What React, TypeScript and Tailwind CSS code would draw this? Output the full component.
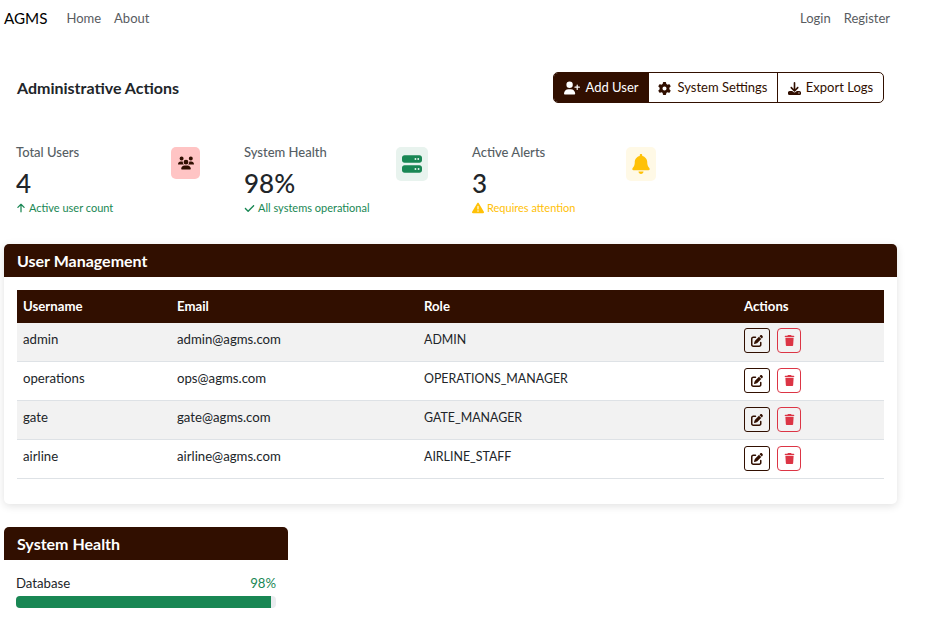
import { FaUserPlus, FaGear, FaDownload, FaUsers, FaServer, FaBell, FaArrowUp, FaCheck, FaTriangleExclamation, FaPenToSquare, FaTrash } from "react-icons/fa6";

const users = [
  ["admin", "admin@agms.com", "ADMIN"],
  ["operations", "ops@agms.com", "OPERATIONS_MANAGER"],
  ["gate", "gate@agms.com", "GATE_MANAGER"],
  ["airline", "airline@agms.com", "AIRLINE_STAFF"],
];

export default function App() {
  return (
    <div className="w-[926px] h-[632px] overflow-hidden bg-white text-[#212529] font-['Lato',sans-serif] text-[13.2px]">
      <nav className="h-[37px] w-[901px] pl-1 pr-[11px] flex items-center text-[13px]">
        <span className="text-[15.2px] text-black mr-[19px]">AGMS</span>
        <a className="text-[#595c5f] mr-[13px]">Home</a>
        <a className="text-[#595c5f]">About</a>
        <a className="text-[#595c5f] ml-auto mr-[13px]">Login</a>
        <a className="text-[#595c5f]">Register</a>
      </nav>

      <div className="w-[901px] pl-[17px] pr-[17px] mt-[35px] h-[31px] flex items-center justify-between">
        <h2 className="text-[16px] font-bold">Administrative Actions</h2>
        <div className="flex h-[31px] rounded-[5px] border border-[#310f00] overflow-hidden text-[13px] text-[#310f00]">
          <button className="bg-[#310f00] text-white flex items-center gap-[5px] w-[95px] justify-center pt-[1px]"><FaUserPlus className="text-[16px]" />Add User</button>
          <button className="flex items-center gap-[6px] w-[129px] justify-center border-r border-[#310f00] pt-[1px]"><FaGear className="text-[13px]" />System Settings</button>
          <button className="flex items-center gap-[5px] w-[105px] justify-center pt-[1px]"><FaDownload className="text-[13px]" />Export Logs</button>
        </div>
      </div>

      <div className="mt-[41px] pl-4 flex h-[78px]">
        <Stat title="Total Users" value="4" sub="Active user count" subClass="text-[#198754]" subIcon={<FaArrowUp className="text-[10px]" />} boxClass="w-[29px] h-[32px] bg-[#ffc4c4] text-[#310f00]" icon={<FaUsers className="text-[16px]" />} mr="mr-[44px]" />
        <Stat title="System Health" value="98%" sub="All systems operational" subClass="text-[#198754]" subIcon={<FaCheck className="text-[11px]" />} boxClass="w-[32px] h-[34px] bg-[#e8f3ee] text-[#198754]" icon={<FaServer className="text-[20px]" />} mr="mr-[44px]" />
        <Stat title="Active Alerts" value="3" sub="Requires attention" subClass="text-[#ffc107]" subIcon={<FaTriangleExclamation className="text-[12px]" />} boxClass="w-[30px] h-[34px] bg-[#fff9e6] text-[#ffc107]" icon={<FaBell className="text-[20px]" />} mr="" />
      </div>

      <section className="mt-[22px] ml-1 w-[893px] h-[260px] rounded-[5px] bg-white shadow-[0_2px_8px_rgba(0,0,0,0.12)]">
        <div className="h-[33px] bg-[#310f00] rounded-t-[5px] pl-[13px] flex items-center text-white text-[16px] font-bold">User Management</div>
        <div className="px-[13px] pt-[13px]">
          <table className="w-[867px] table-fixed border-collapse text-left">
            <thead>
              <tr className="h-[33px] bg-[#310f00] text-white">
                <th className="w-[153px] pl-[6px] font-bold">Username</th>
                <th className="w-[247px] pl-[7px] font-bold">Email</th>
                <th className="w-[320px] pl-[7px] font-bold">Role</th>
                <th className="pl-[7px] font-bold">Actions</th>
              </tr>
            </thead>
            <tbody>
              {users.map((u, i) => (
                <tr key={u[0]} className={`${i === 0 ? "h-[38px]" : "h-[39px]"} border-b border-[#dee2e6] ${i % 2 === 0 ? "bg-[#f2f2f2]" : "bg-white"}`}>
                  <td className="pl-[6px] pb-[4px]">{u[0]}</td>
                  <td className="pl-[7px] pb-[4px]">{u[1]}</td>
                  <td className="pl-[7px] text-[12.4px] pb-[2px]">{u[2]}</td>
                  <td className={`pl-[7px] ${i === 0 ? "pb-[2px]" : "pb-0"}`}>
                    <div className="flex gap-[7px]">
                      <button className="w-[26px] h-[25px] rounded-[3px] border border-[#310f00] text-[#310f00] flex items-center justify-center"><FaPenToSquare className="text-[12px]" /></button>
                      <button className="w-[24px] h-[25px] rounded-[4px] border border-[#dc3545] text-[#dc3545] flex items-center justify-center"><FaTrash className="text-[11px]" /></button>
                    </div>
                  </td>
                </tr>
              ))}
            </tbody>
          </table>
        </div>
      </section>

      <section className="mt-[23px] ml-1 w-[284px] bg-white">
        <div className="h-[33px] bg-[#310f00] rounded-t-[5px] pl-[13px] flex items-center text-white text-[16px] font-bold">System Health</div>
        <div className="px-3 pt-[15px]">
          <div className="flex justify-between h-[18px] items-center">
            <span>Database</span>
            <span className="text-[#198754]">98%</span>
          </div>
          <div className="mt-[3px] h-3 rounded-[4px] bg-[#e9ecef] overflow-hidden">
            <div className="h-full w-[98%] bg-[#198754]" />
          </div>
        </div>
      </section>
    </div>
  );
}

function Stat({ title, value, sub, subClass, subIcon, boxClass, icon, mr }: { title: string; value: string; sub: string; subClass: string; subIcon: React.ReactNode; boxClass: string; icon: React.ReactNode; mr: string }) {
  return (
    <div className={`w-[184px] ${mr} flex justify-between items-start`}>
      <div className="whitespace-nowrap">
        <div className="text-[#565e64] text-[13px] h-[18px] leading-[17px] font-medium">{title}</div>
        <div className="text-[26px] leading-[30px] mt-[6px] font-medium">{value}</div>
        <div className={`flex items-center gap-[3px] text-[11px] mt-[2px] ${subClass}`}>{subIcon}{sub}</div>
      </div>
      <div className={`mt-[3px] rounded-[5px] flex items-center justify-center shrink-0 ${boxClass}`}>{icon}</div>
    </div>
  );
}
